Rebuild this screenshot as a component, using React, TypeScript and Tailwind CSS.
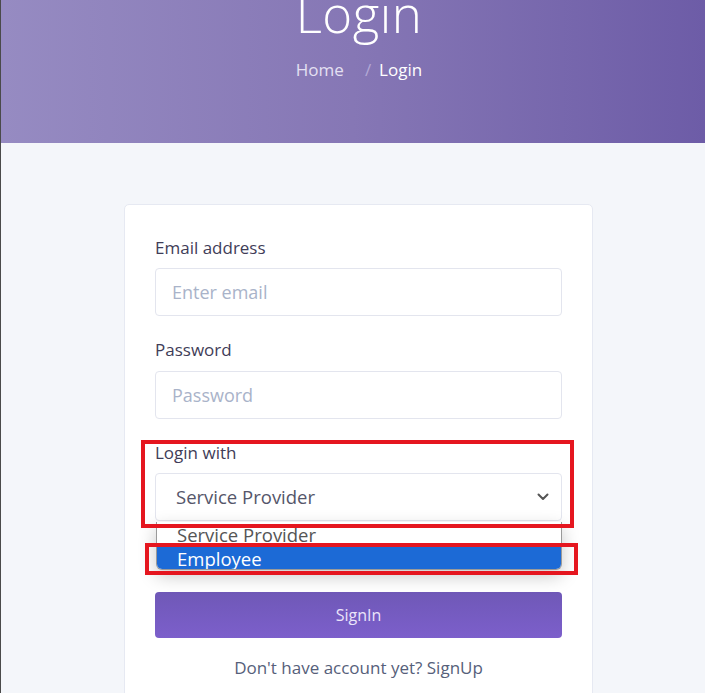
import React from "react";

export default function App() {
  return (
    <div
      className="min-h-screen w-full bg-[#f4f6fa] border-l border-[#4a4a4a] overflow-hidden"
      style={{ fontFamily: '"Open Sans", "Noto Sans", sans-serif' }}
    >
      {/* Header */}
      <div className="h-[143px] bg-gradient-to-r from-[#968bc2] via-[#8677b5] to-[#6d5ca7] flex flex-col items-center pl-[12px]">
        <h1 className="text-[51px] leading-none font-light text-white mt-[-12px] tracking-[0.5px]">Login</h1>
        <div className="flex items-center mt-[19px] text-[17px] leading-6">
          <span className="text-[#e4e0f2]">Home</span>
          <span className="text-[#b3a9d6] ml-[21px] mr-[8px]">/</span>
          <span className="text-white">Login</span>
        </div>
      </div>

      {/* Card */}
      <div className="pt-[61px] pl-[123px]">
        <div className="w-[469px] bg-white border border-[#e6e9f2] rounded-[5px] px-[30px] pt-[31px] pb-[30px]">
          <div className="flex flex-col">
            <label className="text-[17px] leading-6 font-medium text-[#3f3d58]">Email address</label>
            <div className="mt-2 h-[48px] border border-[#e3e5ee] rounded-[4px] flex items-center px-4 text-[18px] text-[#a9b3c9]">
              Enter email
            </div>
          </div>
          <div className="flex flex-col mt-[22px]">
            <label className="text-[17px] leading-6 font-medium text-[#3f3d58]">Password</label>
            <div className="mt-[9px] h-[48px] border border-[#e3e5ee] rounded-[4px] flex items-center px-4 text-[18px] text-[#a9b3c9]">
              Password
            </div>
          </div>
          <div className="flex flex-col mt-[22px] relative">
            <label className="text-[17px] leading-6 font-medium text-[#3f3d58]">Login with</label>
            <div className="mt-2 h-[48px] border border-[#e3e5ee] rounded-[4px] flex items-center justify-between pl-[20px] pr-[12px] text-[18.5px] text-[#55566a]">
              <span>Service Provider</span>
              <svg width="12" height="8" viewBox="0 0 12 8" fill="none">
                <path d="M1.5 1.5 L6 6 L10.5 1.5" stroke="#555" strokeWidth="2" strokeLinecap="round" strokeLinejoin="round" />
              </svg>
            </div>

            {/* Dropdown list */}
            <div className="absolute left-[1px] top-[81px] w-[406px] h-[48px] bg-white border-x border-b border-[#9a9a9a] rounded-b-[6px] shadow-[0_6px_18px_rgba(0,0,0,0.22)] overflow-hidden">
              <div className="h-[25px] flex items-center pl-[20px] text-[18.5px] leading-6 text-[#555]">
                Service Provider
              </div>
              <div className="h-[23px] flex items-center pl-[20px] text-[18.5px] leading-6 text-white bg-[#1c6ad6]">
                Employee
              </div>
            </div>

            {/* Red highlight boxes */}
            <div className="absolute left-[-14px] top-[-1px] w-[433px] h-[88px] border-[4px] border-[#e5161f] pointer-events-none" />
            <div className="absolute left-[-10px] top-[102px] w-[433px] h-[32px] border-[4px] border-[#e5161f] pointer-events-none" />
          </div>

          <button className="mt-[71px] w-full h-[46px] rounded-[4px] bg-gradient-to-b from-[#6f58b7] to-[#7c5fcb] text-[16px] text-[#ebe4fa]">
            SignIn
          </button>
          <p className="mt-[18px] text-center text-[17px] leading-6 text-[#56607a]">
            Don't have account yet? SignUp
          </p>
        </div>
      </div>
    </div>
  );
}
